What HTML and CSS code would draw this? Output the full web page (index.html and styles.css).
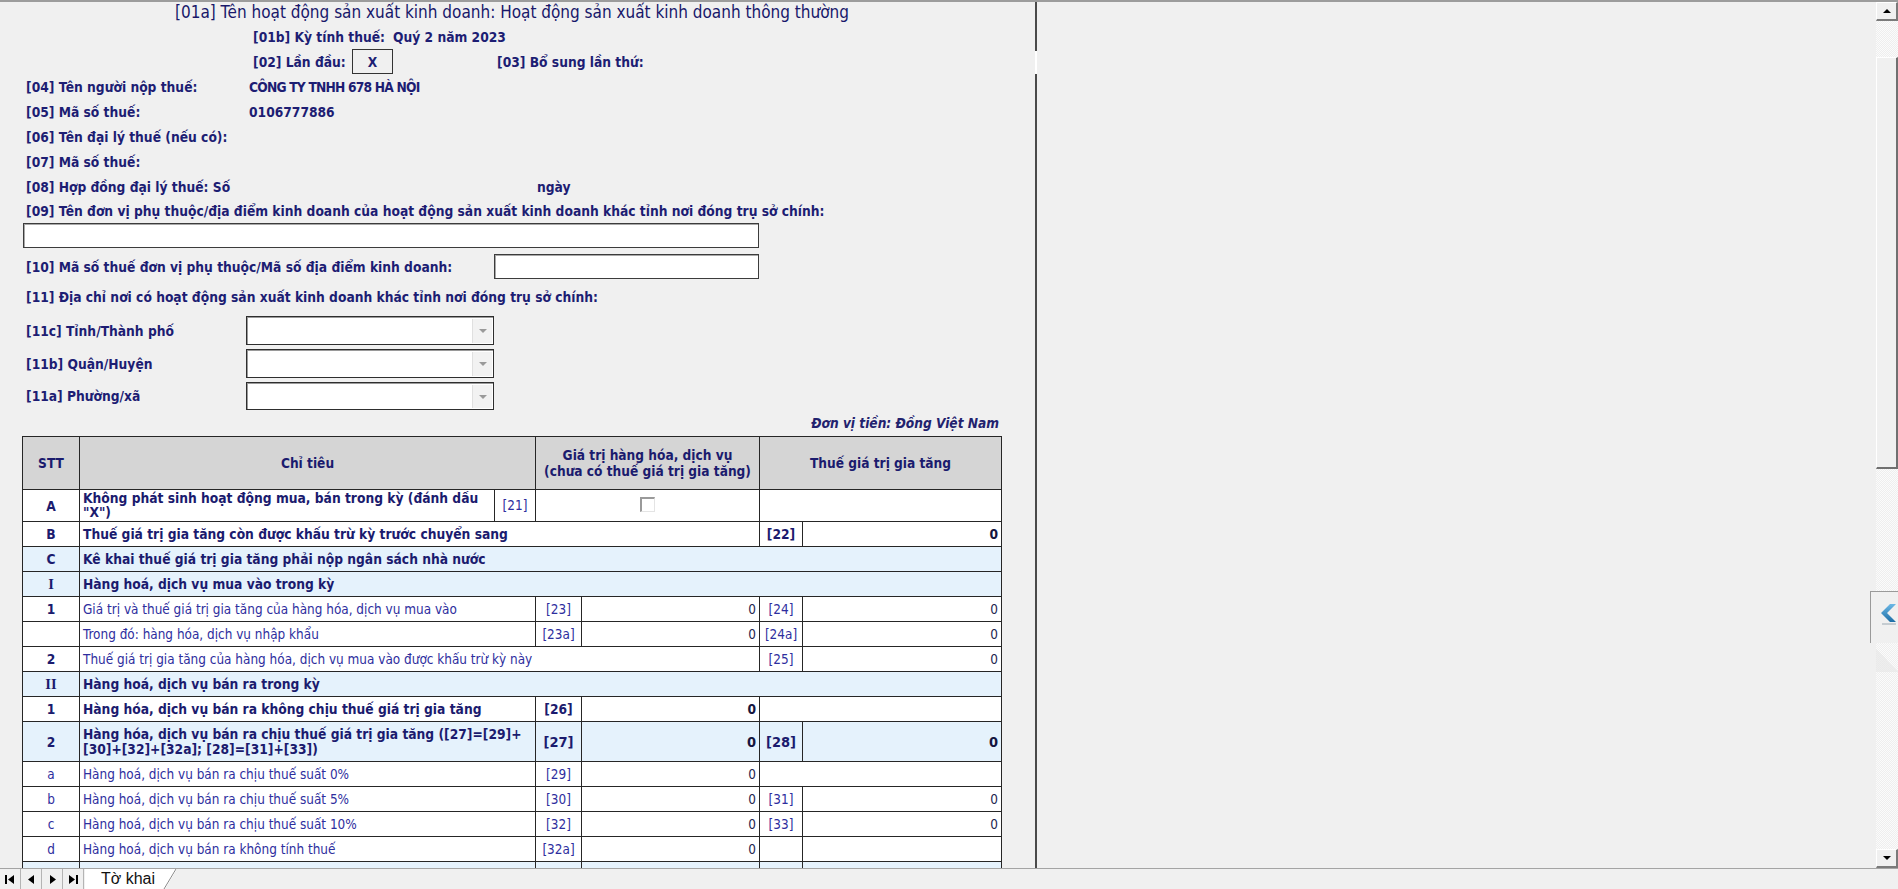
FILE: index.html
```html
<!DOCTYPE html>
<html lang="vi">
<head>
<meta charset="utf-8">
<title>Tờ khai</title>
<link rel="stylesheet" href="styles.css">
</head>
<body>
<div class="app">
  <div class="topline"></div>
  <div class="workspace">
    <div class="pane-left">
      <div class="sheet">
        <div class="frow title-row">[01a] Tên hoạt động sản xuất kinh doanh: Hoạt động sản xuất kinh doanh thông thường</div>
        <div class="frow ind2 b"><span>[01b] Kỳ tính thuế:</span><span class="ky">Quý 2 năm 2023</span></div>
        <div class="frow ind2 b"><span class="w-lan">[02] Lần đầu:</span><span class="xbox">X</span><span class="bs">[03] Bổ sung lần thứ:</span></div>
        <div class="frow ind1 b"><span class="lab">[04] Tên người nộp thuế:</span><span class="caps">CÔNG TY TNHH 678 HÀ NỘI</span></div>
        <div class="frow ind1 b"><span class="lab">[05] Mã số thuế:</span><span>0106777886</span></div>
        <div class="frow ind1 b"><span class="lab">[06] Tên đại lý thuế (nếu có):</span></div>
        <div class="frow ind1 b"><span class="lab">[07] Mã số thuế:</span></div>
        <div class="frow ind1 b"><span class="lab-08">[08] Hợp đồng đại lý thuế: Số</span><span>ngày</span></div>
        <div class="frow ind1 b row-09">[09] Tên đơn vị phụ thuộc/địa điểm kinh doanh của hoạt động sản xuất kinh doanh khác tỉnh nơi đóng trụ sở chính:</div>
        <div class="box-09"></div>
        <div class="frow ind1 b row-10"><span class="lab-10">[10] Mã số thuế đơn vị phụ thuộc/Mã số địa điểm kinh doanh:</span><span class="box-10"></span></div>
        <div class="frow ind1 b row-11">[11] Địa chỉ nơi có hoạt động sản xuất kinh doanh khác tỉnh nơi đóng trụ sở chính:</div>
        <div class="frow ind1 b row-dd"><span class="lab-dd">[11c] Tỉnh/Thành phố</span><span class="dd"><span class="dd-btn"></span></span></div>
        <div class="frow ind1 b row-dd"><span class="lab-dd">[11b] Quận/Huyện</span><span class="dd"><span class="dd-btn"></span></span></div>
        <div class="frow ind1 b row-dd last"><span class="lab-dd">[11a] Phường/xã</span><span class="dd"><span class="dd-btn"></span></span></div>
        <div class="unit-row">Đơn vị tiền: Đồng Việt Nam</div>

        <table class="grid">
          <colgroup>
            <col class="c-stt"><col class="c-ct"><col class="c-21"><col class="c-code"><col class="c-val"><col class="c-code2"><col class="c-val2">
          </colgroup>
          <tr class="hdr">
            <td class="center b">STT</td>
            <td class="center b" colspan="2">Chỉ tiêu</td>
            <td class="center b" colspan="2">Giá trị hàng hóa, dịch vụ<br>(chưa có thuế giá trị gia tăng)</td>
            <td class="center b" colspan="2">Thuế giá trị gia tăng</td>
          </tr>
          <tr class="r-a">
            <td class="center b">A</td>
            <td class="txt b top"><div class="clip">Không phát sinh hoạt động mua, bán trong kỳ (đánh dấu<br>"X")</div></td>
            <td class="code">[21]</td>
            <td colspan="2" class="center"><span class="chk"></span></td>
            <td colspan="2"></td>
          </tr>
          <tr>
            <td class="center b">B</td>
            <td class="txt b" colspan="4">Thuế giá trị gia tăng còn được khấu trừ kỳ trước chuyển sang</td>
            <td class="code b">[22]</td>
            <td class="num b">0</td>
          </tr>
          <tr class="blue">
            <td class="center b">C</td>
            <td class="txt b" colspan="6">Kê khai thuế giá trị gia tăng phải nộp ngân sách nhà nước</td>
          </tr>
          <tr class="blue">
            <td class="center roman">I</td>
            <td class="txt b" colspan="6">Hàng hoá, dịch vụ mua vào trong kỳ</td>
          </tr>
          <tr>
            <td class="center b">1</td>
            <td class="txt" colspan="2">Giá trị và thuế giá trị gia tăng của hàng hóa, dịch vụ mua vào</td>
            <td class="code">[23]</td>
            <td class="num">0</td>
            <td class="code">[24]</td>
            <td class="num">0</td>
          </tr>
          <tr>
            <td class="center"></td>
            <td class="txt" colspan="2">Trong đó: hàng hóa, dịch vụ nhập khẩu</td>
            <td class="code">[23a]</td>
            <td class="num">0</td>
            <td class="code">[24a]</td>
            <td class="num">0</td>
          </tr>
          <tr>
            <td class="center b">2</td>
            <td class="txt" colspan="4">Thuế giá trị gia tăng của hàng hóa, dịch vụ mua vào được khấu trừ kỳ này</td>
            <td class="code">[25]</td>
            <td class="num">0</td>
          </tr>
          <tr class="blue">
            <td class="center roman">II</td>
            <td class="txt b" colspan="6">Hàng hoá, dịch vụ bán ra trong kỳ</td>
          </tr>
          <tr>
            <td class="center b">1</td>
            <td class="txt b" colspan="2">Hàng hóa, dịch vụ bán ra không chịu thuế giá trị gia tăng</td>
            <td class="code b">[26]</td>
            <td class="num b">0</td>
            <td colspan="2"></td>
          </tr>
          <tr class="blue r-27">
            <td class="center b">2</td>
            <td class="txt b tight" colspan="2">Hàng hóa, dịch vụ bán ra chịu thuế giá trị gia tăng ([27]=[29]+<br>[30]+[32]+[32a]; [28]=[31]+[33])</td>
            <td class="code b big">[27]</td>
            <td class="num b big">0</td>
            <td class="code b big">[28]</td>
            <td class="num b big">0</td>
          </tr>
          <tr>
            <td class="center">a</td>
            <td class="txt" colspan="2">Hàng hoá, dịch vụ bán ra chịu thuế suất 0%</td>
            <td class="code">[29]</td>
            <td class="num">0</td>
            <td colspan="2"></td>
          </tr>
          <tr>
            <td class="center">b</td>
            <td class="txt" colspan="2">Hàng hoá, dịch vụ bán ra chịu thuế suất 5%</td>
            <td class="code">[30]</td>
            <td class="num">0</td>
            <td class="code">[31]</td>
            <td class="num">0</td>
          </tr>
          <tr>
            <td class="center">c</td>
            <td class="txt" colspan="2">Hàng hoá, dịch vụ bán ra chịu thuế suất 10%</td>
            <td class="code">[32]</td>
            <td class="num">0</td>
            <td class="code">[33]</td>
            <td class="num">0</td>
          </tr>
          <tr>
            <td class="center">d</td>
            <td class="txt" colspan="2">Hàng hoá, dịch vụ bán ra không tính thuế</td>
            <td class="code">[32a]</td>
            <td class="num">0</td>
            <td class="code"></td>
            <td class="num"></td>
          </tr>
          <tr class="blue r-27">
            <td class="center"></td>
            <td colspan="2"></td>
            <td></td>
            <td></td>
            <td></td>
            <td></td>
          </tr>
        </table>
      </div>
    </div>
    <div class="splitter"></div>
    <div class="pane-right"></div>
    <div class="vscroll">
      <div class="sb-btn"><span class="tri-up"></span></div>
      <div class="sb-hatch sb-hatch-top"></div>
      <div class="sb-thumb"></div>
      <div class="sb-hatch sb-track"></div>
      <div class="sb-btn"><span class="tri-down"></span></div>
      <div class="side-tab">
        <svg class="chev" viewBox="0 0 18 22" width="18" height="22">
          <defs>
            <linearGradient id="cg" x1="0" y1="0" x2="0" y2="1">
              <stop offset="0" stop-color="#6cb8e6"/>
              <stop offset="1" stop-color="#1d6ea6"/>
            </linearGradient>
          </defs>
          <polygon points="11,1 17,1 8,10 17,19 11,19 2,10" fill="url(#cg)"/>
          <line x1="3" y1="21" x2="17" y2="21" stroke="#9aa8b2" stroke-width="1"/>
        </svg>
      </div>
      <div class="side-shade"></div>
    </div>
  </div>
  <div class="tabbar">
    <div class="nav">
      <span class="nbtn"><svg width="10" height="9" viewBox="0 0 10 9"><rect x="0" y="0" width="2" height="9" fill="#000"/><polygon points="9,0 3,4.5 9,9" fill="#000"/></svg></span>
      <span class="nbtn"><svg width="7" height="9" viewBox="0 0 7 9"><polygon points="6,0 0,4.5 6,9" fill="#000"/></svg></span>
      <span class="nbtn"><svg width="7" height="9" viewBox="0 0 7 9"><polygon points="1,0 7,4.5 1,9" fill="#000"/></svg></span>
      <span class="nbtn"><svg width="10" height="9" viewBox="0 0 10 9"><polygon points="1,0 7,4.5 1,9" fill="#000"/><rect x="8" y="0" width="2" height="9" fill="#000"/></svg></span>
    </div>
    <div class="sheettab">Tờ khai<svg class="slant" width="14" height="20" viewBox="0 0 14 20"><line x1="1" y1="20" x2="13" y2="0" stroke="#8a8a8a" stroke-width="1"/></svg></div>
  </div>
</div>
</body>
</html>
```

FILE: styles.css
```css
* { box-sizing: border-box; }
html, body { margin: 0; padding: 0; }
body {
  width: 1898px;
  height: 889px;
  overflow: hidden;
  background: #f0f0f0;
  font-family: "DejaVu Sans Condensed", "DejaVu Sans", sans-serif;
  color: #1d1d73;
}
.app { display: flex; flex-direction: column; height: 889px; }
.topline { height: 2px; flex: none; background: #9c9c9c; }
.workspace {
  height: 867px;
  flex: none;
  display: flex;
  border-bottom: 1px solid #a4a4a4;
}
.pane-left { width: 1035px; flex: none; overflow: hidden; }
.splitter {
  width: 2px;
  flex: none;
  background: linear-gradient(to bottom, #4a4a4a 0 49px, #ffffff 49px 72px, #4a4a4a 72px);
}
.pane-right { flex: 1; }

/* ---------- form ---------- */
.b { font-weight: bold; }
.frow { display: flex; align-items: center; height: 25px; white-space: nowrap; font-size: 13.7px; }
.title-row { height: 19px; margin-bottom: 3px; padding-left: 175px; font-size: 17px; color: #18186a; }
.ind2 { padding-left: 253px; }
.ind1 { padding-left: 26px; }
.ky { margin-left: 8px; }
.caps { letter-spacing: -0.8px; }
.w-lan { width: 99px; }
.xbox {
  width: 41px; height: 25px;
  border: 1px solid #333;
  display: flex; align-items: center; justify-content: center;
  background: #f0f0f0;
}
.bs { margin-left: 104px; }
.lab { width: 223px; }
.lab-08 { width: 511px; }
.row-09 { height: 24px; }
.box-09 {
  margin-left: 23px;
  width: 736px; height: 25px;
  background: #fff;
  border: 1px solid #3c3c3c;
  box-shadow: inset 1px 1px 0 #a8a8a8;
}
.row-10 { margin-top: 6px; }
.lab-10 { width: 468px; }
.box-10 {
  width: 265px; height: 25px;
  background: #fff;
  border: 1px solid #3c3c3c;
  box-shadow: inset 1px 1px 0 #a8a8a8;
}
.row-11 { height: 36px; }
.row-dd { height: 29px; margin-top: 1px; margin-bottom: 4px; }
.row-dd.last { height: 28px; margin-bottom: 0; }
.lab-dd { width: 220px; }
.dd {
  width: 248px; height: 100%;
  background: #fff;
  border: 1px solid #2e2e2e;
  box-shadow: inset 1px 1px 0 #9a9a9a;
  display: flex; justify-content: flex-end; align-items: stretch;
  padding: 2px 1px 1px 0;
}
.dd-btn {
  width: 20px;
  background: #f2f2f2;
  border-left: 1px solid #e0e0e0;
  display: flex; align-items: center; justify-content: center;
}
.dd-btn::before {
  content: "";
  border-left: 4px solid transparent;
  border-right: 4px solid transparent;
  border-top: 4px solid #9a9a9a;
}
.unit-row {
  width: 1001px; height: 26px;
  display: flex; align-items: center; justify-content: flex-end;
  padding-right: 2px;
  font-size: 13.6px; font-weight: bold; font-style: italic;
  color: #22226e;
}

/* ---------- table ---------- */
.grid {
  margin-left: 22px;
  border-collapse: collapse;
  table-layout: fixed;
  width: 979px;
  font-size: 13.45px;
  color: #2e2e9e;
}
.c-stt { width: 57px; }
.c-ct { width: 415px; }
.c-21 { width: 41px; }
.c-code { width: 46px; }
.c-val { width: 178px; }
.c-code2 { width: 43px; }
.c-val2 { width: 199px; }
.grid td {
  border: 1px solid #262626;
  background: #fff;
  height: 25px;
  padding: 0 3px;
  white-space: nowrap;
  overflow: hidden;
  vertical-align: middle;
}
.grid td.b { font-size: 13.7px; color: #1b1b6e; }
.grid tr.hdr td { background: #d5d5d5; height: 53px; color: #1b1b6e; font-size: 13.6px; line-height: 16px; }
.grid tr.blue td { background: #e5f2fc; }
.grid tr.r-a td { height: 32px; }
.grid tr.r-27 td { height: 40px; }
.center { text-align: center; }
.txt { text-align: left; }
.code { text-align: center; }
.num { text-align: right; color: #23234f; }
.grid td.num.b { color: #15153f; }
.grid td.roman { font-family: "Liberation Serif", serif; font-weight: bold; font-size: 14.5px; color: #1b1b6e; }
.grid td.top { vertical-align: top; padding-top: 1px; }
.clip { height: 30px; overflow: hidden; line-height: 14px; }
.grid td.tight { line-height: 15px; }
.grid td.big { font-size: 14.5px; }
.chk {
  display: inline-block;
  width: 15px; height: 15px;
  vertical-align: middle;
  background: #fff;
  border-top: 2px solid #9a9a9a;
  border-left: 2px solid #9a9a9a;
  border-right: 1px solid #e4e4e4;
  border-bottom: 1px solid #e4e4e4;
  margin-top: -3px;
}

/* ---------- scrollbar ---------- */
.vscroll {
  width: 22px; flex: none;
  display: flex; flex-direction: column;
  position: relative;
}
.sb-btn {
  height: 19px; flex: none;
  background: #f0f0f0;
  border-top: 1px solid #ffffff;
  border-left: 1px solid #ffffff;
  border-right: 2px solid #7a7a7a;
  border-bottom: 2px solid #7a7a7a;
  display: flex; align-items: center; justify-content: center;
}
.sb-btn:last-of-type { height: 20px; }
.tri-up { border-left: 4px solid transparent; border-right: 4px solid transparent; border-bottom: 4px solid #000; }
.tri-down { border-left: 4px solid transparent; border-right: 4px solid transparent; border-top: 4px solid #000; }
.sb-hatch {
  background-color: #f6f6f6;
  background-image: repeating-conic-gradient(#fbfbfb 0 25%, #eeeeee 0 50%);
  background-size: 2px 2px;
}
.sb-hatch-top { height: 36px; flex: none; }
.sb-thumb {
  height: 412px; flex: none;
  background: #f0f0f0;
  border-top: 1px solid #fff;
  border-left: 1px solid #fff;
  border-right: 2px solid #707070;
  border-bottom: 2px solid #707070;
}
.sb-track { flex: 1; }
.side-tab {
  position: absolute;
  top: 589px; left: -6px;
  width: 28px; height: 52px;
  background: #f0f0f0;
  border-top: 1px solid #9a9a9a;
  border-left: 1px solid #9a9a9a;
  padding: 11px 0 0 8px;
}
.side-shade {
  position: absolute;
  top: 646px; left: 0;
  width: 22px; height: 24px;
  background: linear-gradient(to bottom left, transparent 50%, #e6e6e6 50%);
  opacity: 0.6;
}

/* ---------- sheet tabs ---------- */
.tabbar {
  height: 20px; flex: none;
  display: flex; align-items: stretch;
  background: #f0f0f0;
}
.nav { display: flex; align-items: center; width: 85px; }
.nbtn {
  width: 21px; height: 20px;
  display: flex; align-items: center; justify-content: center;
  border-right: 1px solid #b4b4b4;
}
.sheettab {
  position: relative;
  width: 92px;
  padding-left: 16px;
  display: flex; align-items: center;
  font-family: "Liberation Sans", sans-serif;
  font-size: 16px;
  color: #111;
  background: #ffffff;
  clip-path: polygon(0 0, 100% 0, calc(100% - 12px) 100%, 0 100%);
}
.slant { position: absolute; right: 0; top: 0; }
```
